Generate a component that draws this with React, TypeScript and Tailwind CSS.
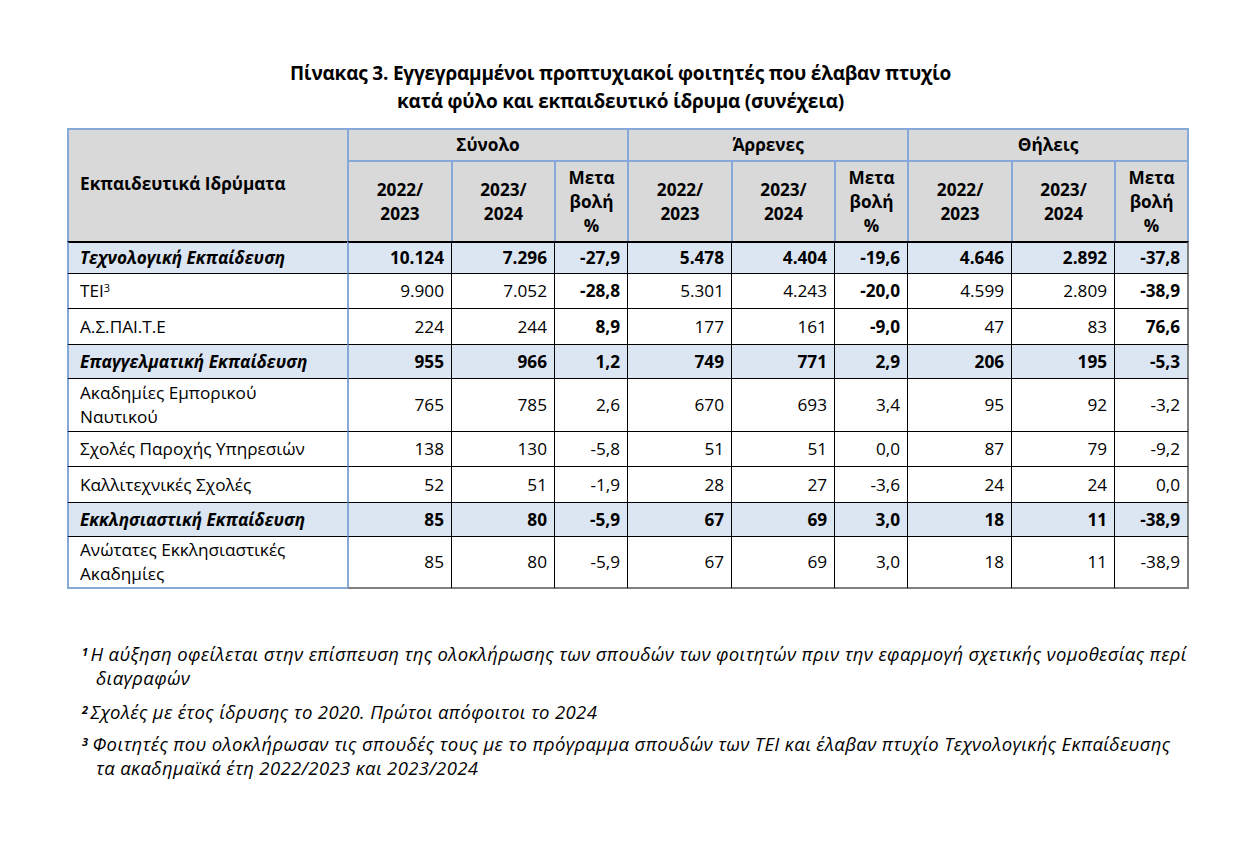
import React from "react";

type Row = {
  label: React.ReactNode;
  values: string[];
  summary?: boolean;
  h: string;
  boldChange?: boolean;
};

const rows: Row[] = [
  { label: "Τεχνολογική Εκπαίδευση", values: ["10.124", "7.296", "-27,9", "5.478", "4.404", "-19,6", "4.646", "2.892", "-37,8"], summary: true, h: "h-[32px]" },
  { label: <>ΤΕΙ<sup className="text-[11px]">3</sup></>, values: ["9.900", "7.052", "-28,8", "5.301", "4.243", "-20,0", "4.599", "2.809", "-38,9"], h: "h-[35px]", boldChange: true },
  { label: "Α.Σ.ΠΑΙ.Τ.Ε", values: ["224", "244", "8,9", "177", "161", "-9,0", "47", "83", "76,6"], h: "h-[36px]", boldChange: true },
  { label: "Επαγγελματική Εκπαίδευση", values: ["955", "966", "1,2", "749", "771", "2,9", "206", "195", "-5,3"], summary: true, h: "h-[34px]" },
  { label: <>Ακαδημίες Εμπορικού<br />Ναυτικού</>, values: ["765", "785", "2,6", "670", "693", "3,4", "95", "92", "-3,2"], h: "h-[53px]" },
  { label: "Σχολές Παροχής Υπηρεσιών", values: ["138", "130", "-5,8", "51", "51", "0,0", "87", "79", "-9,2"], h: "h-[35px]" },
  { label: "Καλλιτεχνικές Σχολές", values: ["52", "51", "-1,9", "28", "27", "-3,6", "24", "24", "0,0"], h: "h-[36px]" },
  { label: "Εκκλησιαστική Εκπαίδευση", values: ["85", "80", "-5,9", "67", "69", "3,0", "18", "11", "-38,9"], summary: true, h: "h-[34px]" },
  { label: <>Ανώτατες Εκκλησιαστικές<br />Ακαδημίες</>, values: ["85", "80", "-5,9", "67", "69", "3,0", "18", "11", "-38,9"], h: "h-[53px]" },
];

const groups = ["Σύνολο", "Άρρενες", "Θήλεις"];

export default function App() {
  return (
    <div className="w-[1241px] h-[853px] bg-white text-black font-['Open_Sans','Noto_Sans',sans-serif]">
      <div className="pt-[59px] text-center text-[19px] font-bold leading-[28px] tracking-[-0.2px]">
        <div>Πίνακας 3. Εγγεγραμμένοι προπτυχιακοί φοιτητές που έλαβαν πτυχίο</div>
        <div>κατά φύλο και εκπαιδευτικό ίδρυμα (συνέχεια)</div>
      </div>

      <table className="ml-[67px] mt-[13px] w-[1122px] table-fixed border-separate border-spacing-0 text-[17.2px] leading-[24px]">
        <colgroup>
          <col className="w-[280px]" />
          {groups.map((g) => (
            <React.Fragment key={g}>
              <col className="w-[104px]" />
              <col className="w-[103px]" />
              <col className={g === "Θήλεις" ? "w-[75px]" : "w-[73px]"} />
            </React.Fragment>
          ))}
        </colgroup>
        <thead>
          <tr className="h-[32px]">
            <th rowSpan={2} className="bg-[#d9d9d9] border-t-2 border-l-2 border-[#86a9d9] text-left font-bold pl-[11px] pb-[4px]">
              Εκπαιδευτικά Ιδρύματα
            </th>
            {groups.map((g, i) => (
              <th
                key={g}
                colSpan={3}
                className={`bg-[#d9d9d9] border-t-2 border-l-2 border-[#86a9d9] font-bold ${i === 2 ? "border-r-2" : ""}`}
              >
                {g}
              </th>
            ))}
          </tr>
          <tr className="h-[81px]">
            {groups.map((g, i) => (
              <React.Fragment key={g}>
                <th className="bg-[#d9d9d9] border-t-2 border-l-2 border-[#86a9d9] font-bold">2022/<br />2023</th>
                <th className="bg-[#d9d9d9] border-t-2 border-l-2 border-[#86a9d9] font-bold">2023/<br />2024</th>
                <th className={`bg-[#d9d9d9] border-t-2 border-l-2 border-[#86a9d9] font-bold ${i === 2 ? "border-r-2" : ""}`}>
                  Μετα<br />βολή<br />%
                </th>
              </React.Fragment>
            ))}
          </tr>
        </thead>
        <tbody>
          {rows.map((r, ri) => {
            const last = ri === rows.length - 1;
            const bg = r.summary ? "bg-[#dce6f2]" : "bg-white";
            return (
              <tr key={ri} className={r.h}>
                <td
                  className={`${bg} text-left pl-[11px] border-l-2 border-l-[#86a9d9] ${ri === 0 ? "border-t-2" : "border-t-[1.5px]"} border-t-black ${last ? "border-b-2 border-b-[#86a9d9]" : ""} ${r.summary ? "font-bold italic" : ""}`}
                >
                  {r.label}
                </td>
                {r.values.map((v, vi) => {
                  const boldVal = r.summary || (r.boldChange && vi % 3 === 2);
                  return (
                    <td
                      key={vi}
                      className={`${bg} text-right pr-[7px] ${ri === 0 ? "border-t-2" : "border-t-[1.5px]"} border-t-black ${vi === 0 ? "border-l-2 border-l-[#86a9d9]" : "border-l-[1.5px] border-l-black"} ${vi === 8 ? "border-r-2 border-r-[#7f7f7f]" : ""} ${last ? "border-b-2 border-b-[#7f7f7f]" : ""} ${boldVal ? "font-bold" : ""}`}
                    >
                      {v}
                    </td>
                  );
                })}
              </tr>
            );
          })}
        </tbody>
      </table>

      <div className="ml-[82px] mt-[53px] w-[1130px] italic text-[18.5px] leading-[24px] tracking-[0.35px]">
        <p className="pl-[14px] -indent-[14px]">
          <sup className="font-bold text-[11px] mr-[2px]">1</sup>Η αύξηση οφείλεται στην επίσπευση της ολοκλήρωσης των σπουδών των φοιτητών πριν την εφαρμογή σχετικής νομοθεσίας περί
          <br />
          διαγραφών
        </p>
        <p className="mt-[10px] pl-[14px] -indent-[14px]">
          <sup className="font-bold text-[11px] mr-[2px]">2</sup>Σχολές με έτος ίδρυσης το 2020. Πρώτοι απόφοιτοι το 2024
        </p>
        <p className="mt-[8px] pl-[14px] -indent-[14px]">
          <sup className="font-bold text-[11px] mr-[4px]">3</sup>Φοιτητές που ολοκλήρωσαν τις σπουδές τους με το πρόγραμμα σπουδών των ΤΕΙ και έλαβαν πτυχίο Τεχνολογικής Εκπαίδευσης
          <br />
          τα ακαδημαϊκά έτη 2022/2023 και 2023/2024
        </p>
      </div>
    </div>
  );
}
